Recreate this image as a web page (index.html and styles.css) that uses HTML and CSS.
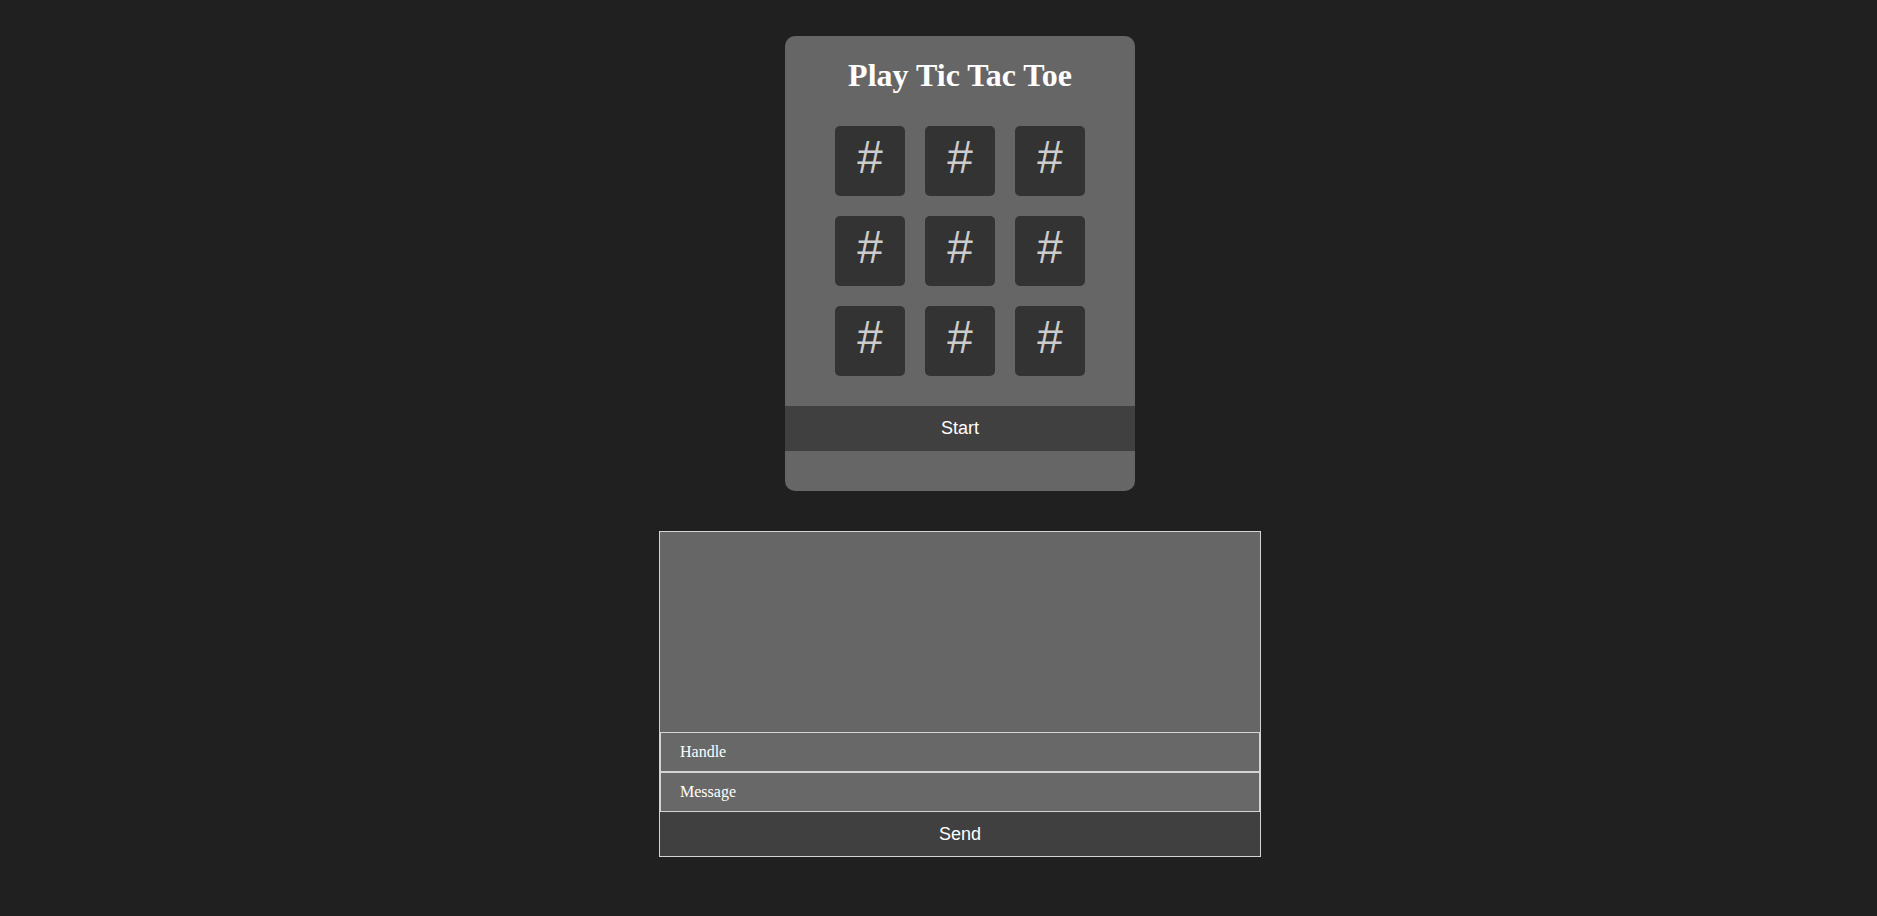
FILE: index.html
```html
<!DOCTYPE html>
<html>
<head>
<meta charset="utf-8">
<title>Tic Tac Toe</title>
<link rel="stylesheet" href="styles.css">
</head>
<body>
<main class="page">
  <section class="game">
    <h1 class="game-title">Play Tic Tac Toe</h1>
    <div class="board">
      <button class="cell">#</button>
      <button class="cell">#</button>
      <button class="cell">#</button>
      <button class="cell">#</button>
      <button class="cell">#</button>
      <button class="cell">#</button>
      <button class="cell">#</button>
      <button class="cell">#</button>
      <button class="cell">#</button>
    </div>
    <button class="action-btn start-btn">Start</button>
  </section>
  <section class="chat">
    <div class="chat-log"></div>
    <input class="chat-input" type="text" placeholder="Handle">
    <input class="chat-input" type="text" placeholder="Message">
    <button class="action-btn send-btn">Send</button>
  </section>
</main>
</body>
</html>
```

FILE: styles.css
```css
html, body {
  margin: 0;
  padding: 0;
  background: #202020;
  overflow: hidden;
}

.page {
  width: 1920px;
  display: flex;
  flex-direction: column;
  align-items: center;
  padding-top: 36px;
}

.game {
  width: 350px;
  box-sizing: border-box;
  background: #666666;
  border-radius: 10px;
  padding: 21px 0 40px;
  display: flex;
  flex-direction: column;
  align-items: center;
}

.game-title {
  margin: 0;
  font-family: "Liberation Serif", "Times New Roman", serif;
  font-size: 32px;
  line-height: 36px;
  font-weight: bold;
  color: #ffffff;
  text-align: center;
}

.board {
  margin-top: 33px;
  display: grid;
  grid-template-columns: repeat(3, 70px);
  grid-auto-rows: 70px;
  gap: 20px;
}

.cell {
  width: 70px;
  height: 70px;
  padding: 0 0 8px;
  margin: 0;
  border: none;
  border-radius: 5px;
  background: #333333;
  color: #cccccc;
  font-family: "Liberation Sans", Arial, sans-serif;
  font-size: 46px;
  line-height: 1;
  display: flex;
  align-items: center;
  justify-content: center;
}

.action-btn {
  display: block;
  width: 100%;
  margin: 0;
  border: none;
  background: #404040;
  color: #ffffff;
  font-family: "Liberation Sans", Arial, sans-serif;
  font-size: 18px;
  text-align: center;
}

.start-btn {
  margin-top: 30px;
  height: 45px;
}

.chat {
  margin-top: 40px;
  width: 602px;
  box-sizing: border-box;
  border: 1px solid #d4d4d4;
  display: flex;
  flex-direction: column;
  background: #666666;
}

.chat-log {
  height: 200px;
  background: #666666;
}

.chat-input {
  display: block;
  box-sizing: border-box;
  width: 100%;
  height: 40px;
  margin: 0;
  padding: 0 19px;
  border: 1px solid #d4d4d4;
  background: #686868;
  color: #ffffff;
  font-family: "Liberation Serif", "Times New Roman", serif;
  font-size: 16px;
  outline: none;
}

.chat-input::placeholder {
  color: #ffffff;
  opacity: 1;
}

.send-btn {
  height: 44px;
}
```
